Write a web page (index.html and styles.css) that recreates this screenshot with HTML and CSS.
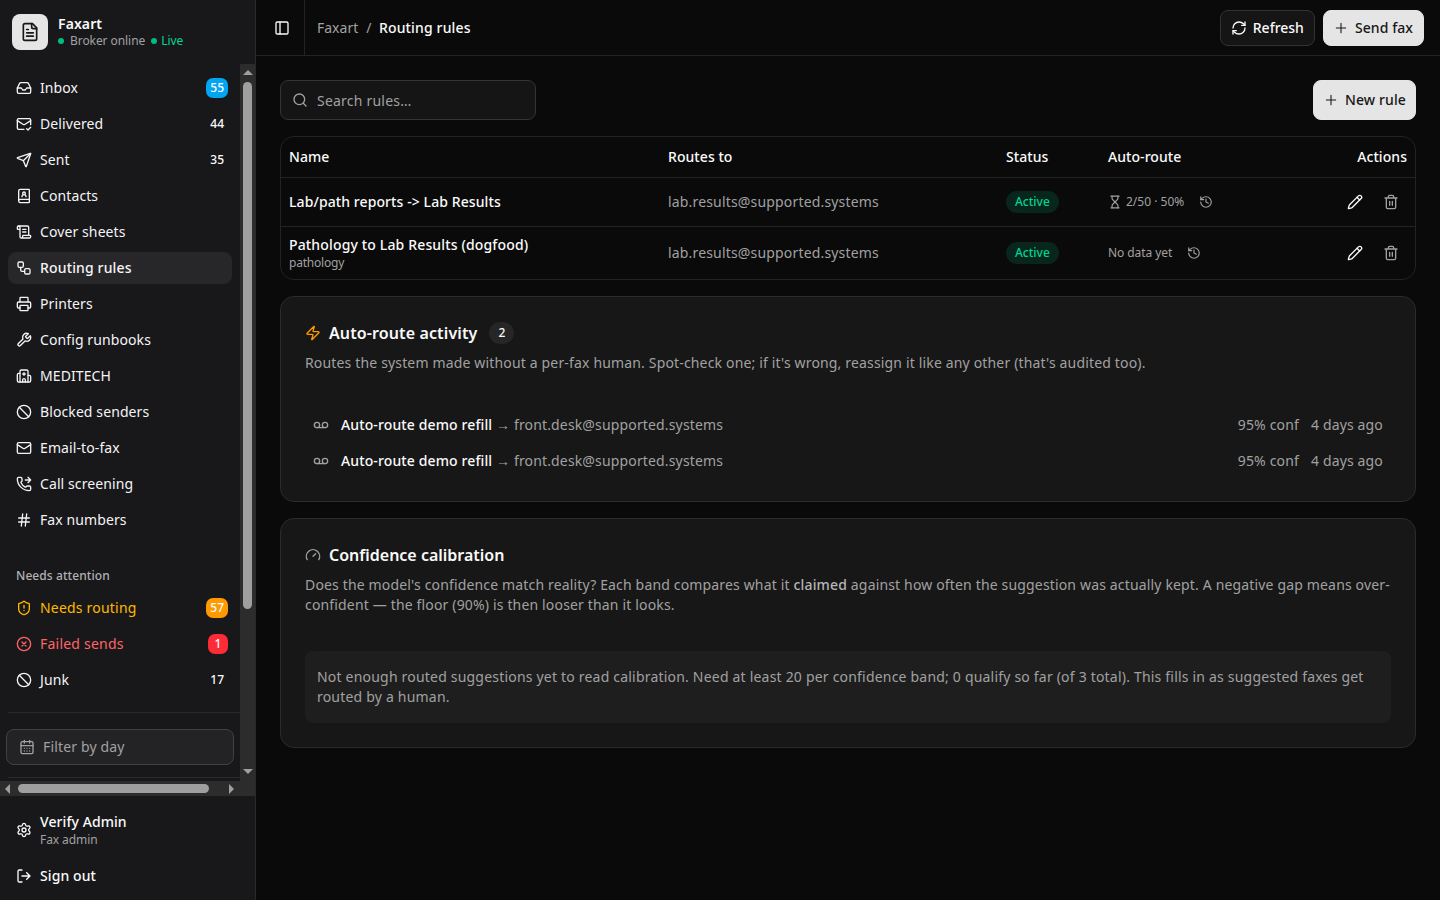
FILE: index.html
```html
<!DOCTYPE html>
<html lang="en">
<head>
<meta charset="utf-8">
<title>Routing rules - Faxart</title>
<link rel="stylesheet" href="styles.css">
</head>
<body>
<svg class="sprite" aria-hidden="true">
  <symbol id="file-text" viewBox="0 0 24 24"><path d="M15 2H6a2 2 0 0 0-2 2v16a2 2 0 0 0 2 2h12a2 2 0 0 0 2-2V7Z"/><path d="M14 2v4a2 2 0 0 0 2 2h4M10 9H8M16 13H8M16 17H8"/></symbol>
  <symbol id="inbox" viewBox="0 0 24 24"><path d="M22 12H16L14 15H10L8 12H2"/><path d="M5.45 5.11 2 12v6a2 2 0 0 0 2 2h16a2 2 0 0 0 2-2v-6l-3.45-6.89A2 2 0 0 0 16.76 4H7.24a2 2 0 0 0-1.79 1.11z"/></symbol>
  <symbol id="mail-check" viewBox="0 0 24 24"><path d="M22 13V6a2 2 0 0 0-2-2H4a2 2 0 0 0-2 2v12c0 1.1.9 2 2 2h8"/><path d="m22 7-8.97 5.7a1.94 1.94 0 0 1-2.06 0L2 7"/><path d="m16 19 2 2 4-4"/></symbol>
  <symbol id="send" viewBox="0 0 24 24"><path d="M14.536 21.686a.5.5 0 0 0 .937-.024l6.5-19a.496.496 0 0 0-.635-.635l-19 6.5a.5.5 0 0 0-.024.937l7.93 3.18a2 2 0 0 1 1.112 1.11z"/><path d="m21.854 2.147-10.94 10.939"/></symbol>
  <symbol id="book-user" viewBox="0 0 24 24"><path d="M15 13a3 3 0 1 0-6 0"/><path d="M4 19.5v-15A2.5 2.5 0 0 1 6.5 2H19a1 1 0 0 1 1 1v18a1 1 0 0 1-1 1H6.5a1 1 0 0 1 0-5H20"/><circle cx="12" cy="8" r="2"/></symbol>
  <symbol id="scroll-text" viewBox="0 0 24 24"><path d="M15 12h-5M15 8h-5M19 17V5a2 2 0 0 0-2-2H4"/><path d="M8 21h12a2 2 0 0 0 2-2v-1a1 1 0 0 0-1-1H11a1 1 0 0 0-1 1v1a2 2 0 1 1-4 0V5a2 2 0 1 0-4 0v2a1 1 0 0 0 1 1h3"/></symbol>
  <symbol id="workflow" viewBox="0 0 24 24"><rect x="3" y="3" width="8" height="8" rx="2"/><path d="M7 11v4a2 2 0 0 0 2 2h4"/><rect x="13" y="13" width="8" height="8" rx="2"/></symbol>
  <symbol id="printer" viewBox="0 0 24 24"><path d="M6 18H4a2 2 0 0 1-2-2v-5a2 2 0 0 1 2-2h16a2 2 0 0 1 2 2v5a2 2 0 0 1-2 2h-2"/><path d="M6 9V3a1 1 0 0 1 1-1h10a1 1 0 0 1 1 1v6"/><rect x="6" y="14" width="12" height="8" rx="1"/></symbol>
  <symbol id="wrench" viewBox="0 0 24 24"><path d="M14.7 6.3a1 1 0 0 0 0 1.4l1.6 1.6a1 1 0 0 0 1.4 0l3.77-3.77a6 6 0 0 1-7.94 7.94l-6.91 6.91a2.12 2.12 0 0 1-3-3l6.91-6.91a6 6 0 0 1 7.94-7.94l-3.76 3.76z"/></symbol>
  <symbol id="hospital" viewBox="0 0 24 24"><path d="M12 7v4M14 21v-3a2 2 0 0 0-4 0v3M14 9h-4"/><path d="M18 11h2a2 2 0 0 1 2 2v6a2 2 0 0 1-2 2H4a2 2 0 0 1-2-2v-9a2 2 0 0 1 2-2h2"/><path d="M18 21V5a2 2 0 0 0-2-2H8a2 2 0 0 0-2 2v16"/></symbol>
  <symbol id="ban" viewBox="0 0 24 24"><circle cx="12" cy="12" r="10"/><path d="M4.929 4.929 19.07 19.071"/></symbol>
  <symbol id="mail" viewBox="0 0 24 24"><path d="m22 7-8.991 5.727a2 2 0 0 1-2.009 0L2 7"/><rect x="2" y="4" width="20" height="16" rx="2"/></symbol>
  <symbol id="phone-forwarded" viewBox="0 0 24 24"><path d="M14 6h8M18 2l4 4-4 4"/><path d="M13.832 16.568a1 1 0 0 0 1.213-.303l.355-.465A2 2 0 0 1 17 15h3a2 2 0 0 1 2 2v3a2 2 0 0 1-2 2A18 18 0 0 1 2 4a2 2 0 0 1 2-2h3a2 2 0 0 1 2 2v3a2 2 0 0 1-.8 1.6l-.468.351a1 1 0 0 0-.292 1.233 14 14 0 0 0 6.392 6.384"/></symbol>
  <symbol id="hash" viewBox="0 0 24 24"><path d="M4 9H20M4 15H20M10 3L8 21M16 3L14 21"/></symbol>
  <symbol id="shield-alert" viewBox="0 0 24 24"><path d="M20 13c0 5-3.5 7.5-7.66 8.95a1 1 0 0 1-.67-.01C7.5 20.5 4 18 4 13V6a1 1 0 0 1 1-1c2 0 4.5-1.2 6.24-2.72a1.17 1.17 0 0 1 1.52 0C14.51 3.81 17 5 19 5a1 1 0 0 1 1 1z"/><path d="M12 8v4M12 16h.01"/></symbol>
  <symbol id="circle-x" viewBox="0 0 24 24"><circle cx="12" cy="12" r="10"/><path d="m15 9-6 6M9 9l6 6"/></symbol>
  <symbol id="calendar" viewBox="0 0 24 24"><path d="M8 2v4M16 2v4"/><rect x="3" y="4" width="18" height="18" rx="2"/><path d="M3 10h18M8 14h.01M12 14h.01M16 14h.01M8 18h.01M12 18h.01M16 18h.01"/></symbol>
  <symbol id="settings" viewBox="0 0 24 24"><path d="M9.671 4.136a2.34 2.34 0 0 1 4.659 0 2.34 2.34 0 0 0 3.319 1.915 2.34 2.34 0 0 1 2.33 4.033 2.34 2.34 0 0 0 0 3.831 2.34 2.34 0 0 1-2.33 4.033 2.34 2.34 0 0 0-3.319 1.915 2.34 2.34 0 0 1-4.659 0 2.34 2.34 0 0 0-3.32-1.915 2.34 2.34 0 0 1-2.33-4.033 2.34 2.34 0 0 0 0-3.831A2.34 2.34 0 0 1 6.35 6.051a2.34 2.34 0 0 0 3.319-1.915"/><circle cx="12" cy="12" r="3"/></symbol>
  <symbol id="log-out" viewBox="0 0 24 24"><path d="m16 17 5-5-5-5M21 12H9M9 21H5a2 2 0 0 1-2-2V5a2 2 0 0 1 2-2h4"/></symbol>
  <symbol id="panel-left" viewBox="0 0 24 24"><rect x="3" y="3" width="18" height="18" rx="2"/><path d="M9 3v18"/></symbol>
  <symbol id="refresh" viewBox="0 0 24 24"><path d="M3 12a9 9 0 0 1 9-9 9.75 9.75 0 0 1 6.74 2.74L21 8"/><path d="M21 3v5h-5"/><path d="M21 12a9 9 0 0 1-9 9 9.75 9.75 0 0 1-6.74-2.74L3 16"/><path d="M8 16H3v5"/></symbol>
  <symbol id="plus" viewBox="0 0 24 24"><path d="M5 12h14M12 5v14"/></symbol>
  <symbol id="search" viewBox="0 0 24 24"><path d="m21 21-4.34-4.34"/><circle cx="11" cy="11" r="8"/></symbol>
  <symbol id="history" viewBox="0 0 24 24"><path d="M3 12a9 9 0 1 0 9-9 9.75 9.75 0 0 0-6.74 2.74L3 8"/><path d="M3 3v5h5M12 7v5l4 2"/></symbol>
  <symbol id="hourglass" viewBox="0 0 24 24"><path d="M5 22h14M5 2h14"/><path d="M17 22v-4.172a2 2 0 0 0-.586-1.414L12 12l-4.414 4.414A2 2 0 0 0 7 17.828V22"/><path d="M7 2v4.172a2 2 0 0 0 .586 1.414L12 12l4.414-4.414A2 2 0 0 0 17 6.172V2"/></symbol>
  <symbol id="pencil" viewBox="0 0 24 24"><path d="M21.174 6.812a1 1 0 0 0-3.986-3.987L3.842 16.174a2 2 0 0 0-.5.83l-1.321 4.352a.5.5 0 0 0 .623.622l4.353-1.32a2 2 0 0 0 .83-.497z"/><path d="m15 5 4 4"/></symbol>
  <symbol id="trash" viewBox="0 0 24 24"><path d="M10 11v6M14 11v6M19 6v14a2 2 0 0 1-2 2H7a2 2 0 0 1-2-2V6M3 6h18M8 6V4a2 2 0 0 1 2-2h4a2 2 0 0 1 2 2v2"/></symbol>
  <symbol id="voicemail" viewBox="0 0 24 24"><circle cx="6" cy="12" r="4"/><circle cx="18" cy="12" r="4"/><path d="M6 16H18"/></symbol>
  <symbol id="zap" viewBox="0 0 24 24"><path d="M4 14a1 1 0 0 1-.78-1.63l9.9-10.2a.5.5 0 0 1 .86.46l-1.92 6.02A1 1 0 0 0 13 10h7a1 1 0 0 1 .78 1.63l-9.9 10.2a.5.5 0 0 1-.86-.46l1.92-6.02A1 1 0 0 0 11 14z"/></symbol>
  <symbol id="gauge" viewBox="0 0 24 24"><path d="m12 14 4-4M3.34 19a10 10 0 1 1 17.32 0"/></symbol>
</svg>
<div class="app">
  <aside class="sidebar">
    <div class="brand">
      <div class="brand-logo"><svg class="icon icon-brand"><use href="#file-text"/></svg></div>
      <div class="brand-text">
        <div class="brand-name">Faxart</div>
        <div class="brand-status"><i class="dot"></i><span class="broker">Broker online</span><i class="dot"></i><span class="live">Live</span></div>
      </div>
    </div>
    <div class="scroller">
      <div class="viewport">
        <nav class="menu">
          <a class="item"><svg class="icon"><use href="#inbox"/></svg>Inbox<span class="count count-blue">55</span></a>
          <a class="item"><svg class="icon"><use href="#mail-check"/></svg>Delivered<span class="count">44</span></a>
          <a class="item"><svg class="icon"><use href="#send"/></svg>Sent<span class="count">35</span></a>
          <a class="item"><svg class="icon"><use href="#book-user"/></svg>Contacts</a>
          <a class="item"><svg class="icon"><use href="#scroll-text"/></svg>Cover sheets</a>
          <a class="item item-active"><svg class="icon"><use href="#workflow"/></svg>Routing rules</a>
          <a class="item"><svg class="icon"><use href="#printer"/></svg>Printers</a>
          <a class="item"><svg class="icon"><use href="#wrench"/></svg>Config runbooks</a>
          <a class="item"><svg class="icon"><use href="#hospital"/></svg>MEDITECH</a>
          <a class="item"><svg class="icon"><use href="#ban"/></svg>Blocked senders</a>
          <a class="item"><svg class="icon"><use href="#mail"/></svg>Email-to-fax</a>
          <a class="item"><svg class="icon"><use href="#phone-forwarded"/></svg>Call screening</a>
          <a class="item"><svg class="icon"><use href="#hash"/></svg>Fax numbers</a>
        </nav>
        <nav class="menu menu-attention">
          <div class="menu-label">Needs attention</div>
          <a class="item item-amber"><svg class="icon"><use href="#shield-alert"/></svg>Needs routing<span class="count count-amber">57</span></a>
          <a class="item item-red"><svg class="icon"><use href="#circle-x"/></svg>Failed sends<span class="count count-red">1</span></a>
          <a class="item"><svg class="icon"><use href="#ban"/></svg>Junk<span class="count">17</span></a>
        </nav>
        <div class="rule"></div>
        <div class="day-filter"><svg class="icon"><use href="#calendar"/></svg>Filter by day</div>
        <div class="rule"></div>
      </div>
      <div class="bar bar-y"><i class="arrow arrow-up"></i><i class="thumb thumb-y"></i><i class="arrow arrow-down"></i></div>
      <div class="bar bar-x"><i class="arrow arrow-left"></i><i class="thumb thumb-x"></i><i class="arrow arrow-right"></i></div>
      <div class="bar"></div>
    </div>
    <div class="account">
      <a class="user"><svg class="icon"><use href="#settings"/></svg><span><span class="user-name">Verify Admin</span><span class="user-role">Fax admin</span></span></a>
      <a class="item sign-out"><svg class="icon"><use href="#log-out"/></svg>Sign out</a>
    </div>
  </aside>
  <div class="page">
    <header class="topbar">
      <div class="toggle"><svg class="icon"><use href="#panel-left"/></svg></div>
      <div class="crumbs"><span>Faxart</span><span>/</span><span class="crumb-current">Routing rules</span></div>
      <button class="btn btn-outline"><svg class="icon"><use href="#refresh"/></svg>Refresh</button>
      <button class="btn btn-primary"><svg class="icon"><use href="#plus"/></svg>Send fax</button>
    </header>
    <main class="content">
      <div class="tools">
        <div class="search"><svg class="icon"><use href="#search"/></svg><span class="placeholder">Search rules…</span></div>
        <button class="btn btn-primary btn-tall"><svg class="icon"><use href="#plus"/></svg>New rule</button>
      </div>
      <section class="table">
        <div class="row row-head"><span>Name</span><span>Routes to</span><span>Status</span><span>Auto-route</span><span class="right">Actions</span></div>
        <div class="row row-one">
          <span class="name">Lab/path reports -&gt; Lab Results</span>
          <span class="muted">lab.results@supported.systems</span>
          <span><span class="pill">Active</span></span>
          <span class="auto"><svg class="icon icon-small"><use href="#hourglass"/></svg><span>2/50 · 50%</span><svg class="icon icon-small history"><use href="#history"/></svg></span>
          <span class="actions"><svg class="icon"><use href="#pencil"/></svg><svg class="icon muted"><use href="#trash"/></svg></span>
        </div>
        <div class="row row-two">
          <span class="name name-long">Pathology to Lab Results (dogfood)<small class="sub">pathology</small></span>
          <span class="muted">lab.results@supported.systems</span>
          <span><span class="pill">Active</span></span>
          <span class="auto"><span class="tight">No data yet</span><svg class="icon icon-small history"><use href="#history"/></svg></span>
          <span class="actions"><svg class="icon"><use href="#pencil"/></svg><svg class="icon muted"><use href="#trash"/></svg></span>
        </div>
      </section>
      <section class="card card-activity">
        <h2 class="card-title card-title-wide"><svg class="icon zap"><use href="#zap"/></svg>Auto-route activity<span class="tally">2</span></h2>
        <p class="desc">Routes the system made without a per-fax human. Spot-check one; if it's wrong, reassign it like any other (that's audited too).</p>
        <div class="events">
          <div class="event"><svg class="icon"><use href="#voicemail"/></svg><span><b class="event-name">Auto-route demo refill</b> → front.desk@supported.systems</span><span class="conf">95% conf</span><span>4 days ago</span></div>
          <div class="event"><svg class="icon"><use href="#voicemail"/></svg><span><b class="event-name">Auto-route demo refill</b> → front.desk@supported.systems</span><span class="conf">95% conf</span><span>4 days ago</span></div>
        </div>
      </section>
      <section class="card">
        <h2 class="card-title"><svg class="icon muted"><use href="#gauge"/></svg>Confidence calibration</h2>
        <p class="desc">Does the model's confidence match reality? Each band compares what it <b class="claimed">claimed</b> against how often the suggestion was actually kept. A negative gap means over-confident — the floor (90%) is then looser than it looks.</p>
        <p class="note">Not enough routed suggestions yet to read calibration. Need at least 20 per confidence band; 0 qualify so far (of 3 total). This fills in as suggested faxes get routed by a human.</p>
      </section>
    </main>
  </div>
</div>
</body>
</html>
```
FILE: styles.css
```css
* { box-sizing: border-box; }
body {
  margin: 0;
  background: #0a0a0a;
  color: #fafafa;
  font: 14px/20px "Noto Sans", sans-serif;
}
.sprite { display: none; }
.icon {
  width: 16px;
  height: 16px;
  flex: none;
  fill: none;
  stroke: currentColor;
  stroke-width: 2;
  stroke-linecap: round;
  stroke-linejoin: round;
}
.icon-small { width: 14px; height: 14px; }
.icon-brand { width: 20px; height: 20px; }
.muted { color: #a1a1a1; }
.app { display: flex; width: 1440px; height: 900px; overflow: hidden; }

/* Sidebar */
.sidebar {
  display: flex;
  flex-direction: column;
  flex: none;
  width: 256px;
  background: #18181b;
  border-right: 1px solid #29292b;
}
.brand { display: flex; flex: none; align-items: center; gap: 10px; height: 64px; padding: 0 12px; }
.brand-logo {
  display: flex;
  align-items: center;
  justify-content: center;
  width: 36px;
  height: 36px;
  border-radius: 8px;
  background: #e5e5e5;
  color: #171717;
}
.brand-name { font-weight: 600; line-height: 18px; letter-spacing: 0.1px; }
.brand-status { display: flex; align-items: center; font-size: 12px; line-height: 16px; letter-spacing: -0.07px; }
.dot { width: 6px; height: 6px; margin-right: 6px; border-radius: 50%; background: #00bc7d; }
.brand-status .dot + .live { margin-left: -2px; }
.broker { margin-right: 6px; color: #a1a1a1; }
.live { color: #00d492; }
.scroller { display: grid; flex: none; grid-template: 717px 15px / 240px 15px; }
.viewport { overflow: hidden; color: #f4f4f5; }
.menu { padding: 6px 8px; }
.menu-attention { padding-top: 17px; }
.menu-label {
  height: 29px;
  padding: 0 8px;
  color: #b2b2b4;
  font-size: 12px;
  font-weight: 500;
  line-height: 30px;
  letter-spacing: 0.08px;
}
.item { display: flex; align-items: center; gap: 8px; height: 36px; padding: 0 8px; letter-spacing: 0.1px; }
.item-active { height: 32px; margin: 2px 0; border-radius: 8px; background: #27272a; font-weight: 500; letter-spacing: 0.15px; }
.item-amber { color: #ffb900; letter-spacing: 0.2px; }
.item-red { color: #ff6467; letter-spacing: 0.22px; }
.count {
  min-width: 20px;
  height: 20px;
  margin: 0 -4px 0 auto;
  padding: 0 4px;
  border-radius: 7px;
  color: #fafafa;
  font-size: 12px;
  font-weight: 500;
  line-height: 20px;
  letter-spacing: 0;
  text-align: center;
}
.count-blue { background: #00a6f4; }
.count-amber { background: #fe9a00; }
.count-red { background: #fb2c36; }
.rule { height: 1px; margin-left: 8px; background: #29292b; }
.menu-attention + .rule { margin-top: 8px; }
.day-filter {
  display: flex;
  align-items: center;
  gap: 8px;
  height: 36px;
  margin: 16px 6px 12px;
  padding: 0 12px;
  border: 1px solid #414144;
  border-radius: 8px;
  background: #232326;
  color: #a1a1a1;
  letter-spacing: 0.16px;
}

/* Scrollbars */
.bar { background: #2c2c2c; }
.bar-y { display: flex; flex-direction: column; align-items: center; padding: 6px 0 7px; }
.bar-x { display: flex; align-items: center; padding: 0 6px 0 5px; }
.thumb { border-radius: 5px; background: #9f9f9f; }
.thumb-y { width: 9px; height: 527px; margin-top: 7px; }
.thumb-x { width: 191px; height: 9px; margin-left: 8px; }
.arrow { border: 0 solid transparent; }
.arrow-up { border-width: 0 5px 5px; border-bottom-color: #9f9f9f; }
.arrow-down { margin-top: auto; border-width: 5px 5px 0; border-top-color: #9f9f9f; }
.arrow-left { border-width: 5px 5px 5px 0; border-right-color: #9f9f9f; }
.arrow-right { margin-left: auto; border-width: 5px 0 5px 5px; border-left-color: #9f9f9f; }
.account { padding: 8px; }
.user { display: flex; align-items: center; gap: 8px; height: 52px; padding: 0 8px; }
.user-name, .user-role { display: block; }
.user-name { font-weight: 500; letter-spacing: 0.08px; }
.user-role { font-size: 12px; line-height: 16px; letter-spacing: -0.08px; color: #a1a1a1; }
.sign-out { margin-top: 2px; font-weight: 500; }

/* Page header */
.page { flex: 1; min-width: 0; }
.topbar {
  display: flex;
  align-items: center;
  gap: 8px;
  height: 56px;
  padding-right: 16px;
  border-bottom: 1px solid #222;
}
.toggle { display: flex; align-items: center; width: 49px; height: 55px; padding-left: 18px; border-right: 1px solid #222; }
.crumbs { display: flex; gap: 8px; margin: 0 auto 0 4px; color: #a1a1a1; }
.crumb-current { margin-left: -0.5px; color: #fafafa; font-weight: 500; letter-spacing: 0.15px; }
.btn {
  display: flex;
  align-items: center;
  gap: 6px;
  height: 36px;
  padding: 0 10px;
  border: 1px solid #323232;
  border-radius: 8px;
  background: #151515;
  color: #fafafa;
  font: 500 14px/20px "Noto Sans", sans-serif;
}
.btn-primary { padding-left: 9px; border-color: #e5e5e5; background: #e5e5e5; color: #171717; letter-spacing: 0.08px; }
.btn-primary .icon { stroke-width: 1.6; }
.btn-tall { height: 40px; padding: 0 9px; letter-spacing: 0.12px; }

/* Rules */
.content { display: flex; flex-direction: column; gap: 16px; padding: 24px; }
.tools { display: flex; justify-content: space-between; }
.search {
  display: flex;
  align-items: center;
  gap: 9px;
  width: 256px;
  height: 40px;
  padding: 0 11px;
  border: 1px solid #353535;
  border-radius: 8px;
  background: #151515;
  color: #a1a1a1;
}
.placeholder { padding-top: 2px; letter-spacing: 0.22px; }
.table { border: 1px solid #222; border-radius: 14px; }
.row {
  display: grid;
  grid-template-columns: 379px 338px 102px 1fr 100px;
  align-items: center;
  border-bottom: 1px solid #222;
}
.row > * { padding: 0 8px; }
.row > .muted { letter-spacing: 0.17px; }
.row-head { height: 41px; font-weight: 500; letter-spacing: 0.06px; }
.row-one { height: 49px; }
.row-two { height: 52px; border-bottom: 0; }
.right { text-align: right; }
.name { font-weight: 500; letter-spacing: 0.09px; }
.name-long { letter-spacing: 0.15px; }
.sub { display: block; font-size: 12px; font-weight: 400; line-height: 16px; letter-spacing: -0.2px; color: #a1a1a1; }
.pill {
  display: inline-block;
  height: 22px;
  padding: 0 9px;
  border-radius: 11px;
  background: #09261c;
  color: #00d492;
  font-size: 12px;
  font-weight: 500;
  line-height: 22px;
  vertical-align: middle;
}
.auto { display: flex; align-items: center; gap: 4px; font-size: 12px; color: #a1a1a1; }
.tight { letter-spacing: -0.08px; }
.history { margin-left: 11px; }
.row .actions { display: flex; justify-content: flex-end; gap: 20px; padding-right: 16px; }

/* Cards */
.card { padding: 24px; border: 1px solid #2b2b2b; border-radius: 14px; background: #171717; }
.card-activity { padding-bottom: 22px; }
.card-title { display: flex; align-items: center; gap: 8px; height: 24px; margin: 0; font-size: 16px; font-weight: 600; }
.card-title-wide { letter-spacing: 0.12px; }
.zap { color: #fe9a00; }
.tally {
  height: 22px;
  margin-left: 4px;
  padding: 0 9px;
  border-radius: 11px;
  background: #262626;
  font-size: 12px;
  font-weight: 500;
  line-height: 22px;
  letter-spacing: 0;
}
.desc { margin: 8px 0 0; color: #a1a1a1; letter-spacing: 0.16px; }
.events { margin-top: 34px; }
.event { display: flex; align-items: center; gap: 12px; height: 36px; padding: 0 8px; color: #a1a1a1; letter-spacing: 0.15px; }
.event-name { color: #fafafa; font-weight: 500; letter-spacing: 0.12px; }
.conf { margin-left: auto; }
.claimed { font-weight: 500; color: #b5b5b5; }
.note {
  height: 72px;
  margin: 36px 0 0;
  padding: 16px 12px;
  border-radius: 8px;
  background: #1e1e1e;
  color: #a1a1a1;
  letter-spacing: 0.2px;
}
```
